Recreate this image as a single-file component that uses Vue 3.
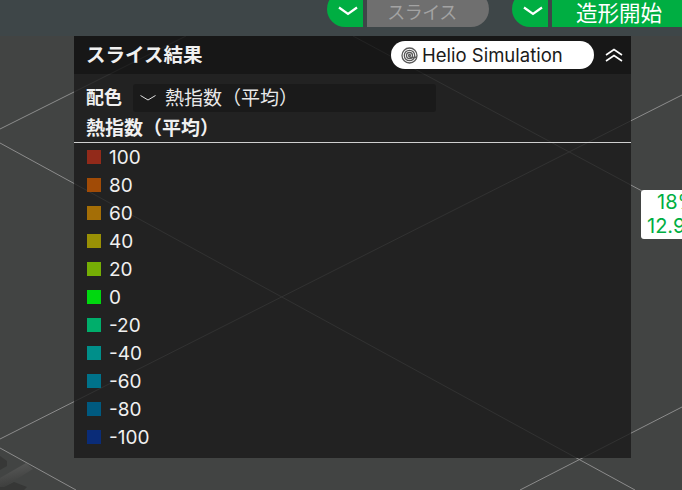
<template>
    <div class="page">
        <!-- 背面のビルドプレート -->
        <svg class="plate" width="682" height="490" viewBox="0 0 682 490">
            <defs>
                <linearGradient id="bar" x1="0" y1="0" x2="0.3" y2="1">
                    <stop offset="0" stop-color="#5c5d5c" />
                    <stop offset="1" stop-color="#3c3d3c" />
                </linearGradient>
            </defs>
            <polygon points="0,456 7,461 7,466 0,470" fill="#373837" />
            <polygon points="0,478 26,463 33,469 4,487 0,487" fill="url(#bar)" />
            <polygon points="0,490 0,487 4,487 14,482 27,487 24,490" fill="#363736" />
            <g stroke="#8c8c8c" stroke-width="1" fill="none">
                <line x1="0" y1="129" x2="186" y2="36" />
                <line x1="0" y1="143" x2="635" y2="490" />
                <line x1="0" y1="439" x2="682" y2="95" />
                <line x1="353" y1="36" x2="642" y2="191" />
                <line x1="520" y1="490" x2="682" y2="407" />
                <line x1="0" y1="448" x2="76" y2="490" />
            </g>
        </svg>

        <div class="topbar">
            <button class="chev">
                <svg width="20" height="10" viewBox="0 0 20 10"><path d="M1 1.5 L10 8 L19 1.5" /></svg>
            </button>
            <button class="action disabled">スライス</button>
            <button class="chev second">
                <svg width="20" height="10" viewBox="0 0 20 10"><path d="M1 1.5 L10 8 L19 1.5" /></svg>
            </button>
            <button class="action start">造形開始</button>
        </div>

        <div class="main">
            <div class="panel">
                <div class="header">
                    <h2>スライス結果</h2>
                    <div class="pill">
                        <svg class="helio" width="17" height="17" viewBox="0 0 17 17">
                            <circle cx="8.5" cy="8.5" r="7.5" />
                            <circle cx="8.5" cy="8.5" r="5.2" />
                            <circle cx="8.5" cy="8.5" r="3" />
                            <circle cx="8.5" cy="8.5" r="1" />
                            <path d="M8.5 11 L16 10" />
                        </svg>
                        <span>Helio Simulation</span>
                    </div>
                    <svg class="collapse" width="18" height="14" viewBox="0 0 18 14">
                        <path d="M1 7 L9 1.5 L17 7" />
                        <path d="M1 13 L9 7.5 L17 13" />
                    </svg>
                </div>

                <div class="color-row">
                    <span class="label">配色</span>
                    <div class="select">
                        <svg width="16" height="6" viewBox="0 0 16 6"><path d="M0.5 0.5 L8 5 L15.5 0.5" /></svg>
                        <span class="select-value">{{ metric }}</span>
                    </div>
                </div>
                <div class="legend-title">{{ metric }}</div>

                <ul class="legend">
                    <li v-for="item in legend" :key="item.value">
                        <i :style="{ background: item.color }"></i>
                        <span>{{ item.value }}</span>
                    </li>
                </ul>
            </div>
        </div>

        <!-- 造形プレート上のラベル -->
        <div class="plate-tag">
            <div class="tag-top">18%</div>
            <div>12.9g</div>
        </div>
    </div>
</template>

<script setup>
const metric = '熱指数（平均）'

const legend = [
    { value: '100', color: '#922a1a' },
    { value: '80', color: '#a14b06' },
    { value: '60', color: '#a46e06' },
    { value: '40', color: '#999005' },
    { value: '20', color: '#75ae05' },
    { value: '0', color: '#00d80f' },
    { value: '-20', color: '#00ae6b' },
    { value: '-40', color: '#008f8a' },
    { value: '-60', color: '#00728a' },
    { value: '-80', color: '#005a80' },
    { value: '-100', color: '#0a2c78' },
]
</script>

<style>
html, body {
    margin: 0;
    background: #424443;
}
</style>

<style scoped>
.page {
    position: relative;
    width: 682px;
    height: 490px;
    overflow: hidden;
    background: #424443;
    color: #f0f0f0;
    font-family: Inter, "Noto Sans CJK JP", sans-serif;
}

.plate {
    position: absolute;
    left: 0;
    top: 0;
}

.topbar {
    position: relative;
    height: 36px;
    padding-left: 327px;
    box-sizing: border-box;
    display: flex;
    background: #3e4648;
}

.topbar button {
    flex: none;
    height: 36px;
    margin-top: -9px;
    border: none;
    padding: 0;
    font: inherit;
}

.chev {
    width: 36px;
    background: #00ae42;
    border-radius: 18px 0 0 18px;
    display: flex;
    align-items: center;
    justify-content: center;
    padding: 3px 0 0 6px !important;
}

.chev.second {
    margin-left: 23px;
}

.chev svg path {
    fill: none;
    stroke: #fff;
    stroke-width: 2.2;
}

.action {
    margin-left: 4px;
    padding-top: 4px !important;
    line-height: 30px;
}

.disabled {
    width: 122px;
    background: #6f6f6f;
    color: #a3a3a3;
    border-radius: 0 18px 18px 0;
    font-size: 18px !important;
    padding-right: 12px !important;
    letter-spacing: -0.5px;
}

.start {
    width: 130px;
    background: #00ae42;
    color: #fff;
    text-align: left;
    font-size: 21.5px !important;
    padding-left: 24px !important;
}

.main {
    position: relative;
    padding-left: 74px;
}

.panel {
    width: 557px;
    height: 422px;
    background: rgba(26, 26, 26, 0.8);
}

.header {
    height: 38px;
    display: flex;
    align-items: center;
    padding: 0 8px 0 12px;
    background: rgba(0, 0, 0, 0.3);
}

.header h2 {
    margin: 0;
    font-size: 19.5px;
    font-weight: 700;
    line-height: 38px;
    flex: 1;
}

.pill {
    width: 203px;
    height: 28px;
    box-sizing: border-box;
    padding-left: 10px;
    border-radius: 14px;
    background: #fff;
    color: #1a1a1a;
    display: flex;
    align-items: center;
    gap: 4px;
    font-size: 18.5px;
}

.helio {
    fill: none;
    stroke: #5a5a5a;
    stroke-width: 1.3;
}

.collapse {
    margin-left: 11px;
    fill: none;
    stroke: #fff;
    stroke-width: 1.6;
}

.color-row {
    display: flex;
    align-items: center;
    gap: 9px;
    padding: 10px 0 0 12px;
}

.label {
    width: 38px;
    font-size: 18px;
    font-weight: 700;
    line-height: 24px;
}

.select {
    width: 303px;
    height: 28px;
    background: #1a1a1a;
    border-radius: 3px;
    display: flex;
    align-items: center;
    gap: 9px;
    padding-left: 7px;
    box-sizing: border-box;
    font-size: 19px;
    color: #e8e8e8;
}

.select-value {
    margin-top: -3px;
}

.select svg path {
    fill: none;
    stroke: #e0e0e0;
    stroke-width: 1;
}

.legend-title {
    padding: 4px 12px 0;
    height: 31px;
    box-sizing: border-box;
    font-size: 19px;
    font-weight: 700;
    line-height: 26px;
    border-bottom: 1px solid #cfcfcf;
}

.legend {
    list-style: none;
    margin: 0;
    padding: 0 0 0 13px;
}

.legend li {
    height: 28px;
    display: flex;
    align-items: center;
    gap: 8px;
    font-size: 19px;
}

.legend i {
    width: 14px;
    height: 14px;
    margin-top: -1px;
}

.plate-tag {
    position: absolute;
    left: 641px;
    top: 190px;
    width: 64px;
    height: 49px;
    box-sizing: border-box;
    padding-left: 6px;
    background: #fff;
    border-radius: 3px;
    color: #00ae42;
    font-size: 20px;
    line-height: 24px;
}

.tag-top {
    padding-left: 10px;
}
</style>
